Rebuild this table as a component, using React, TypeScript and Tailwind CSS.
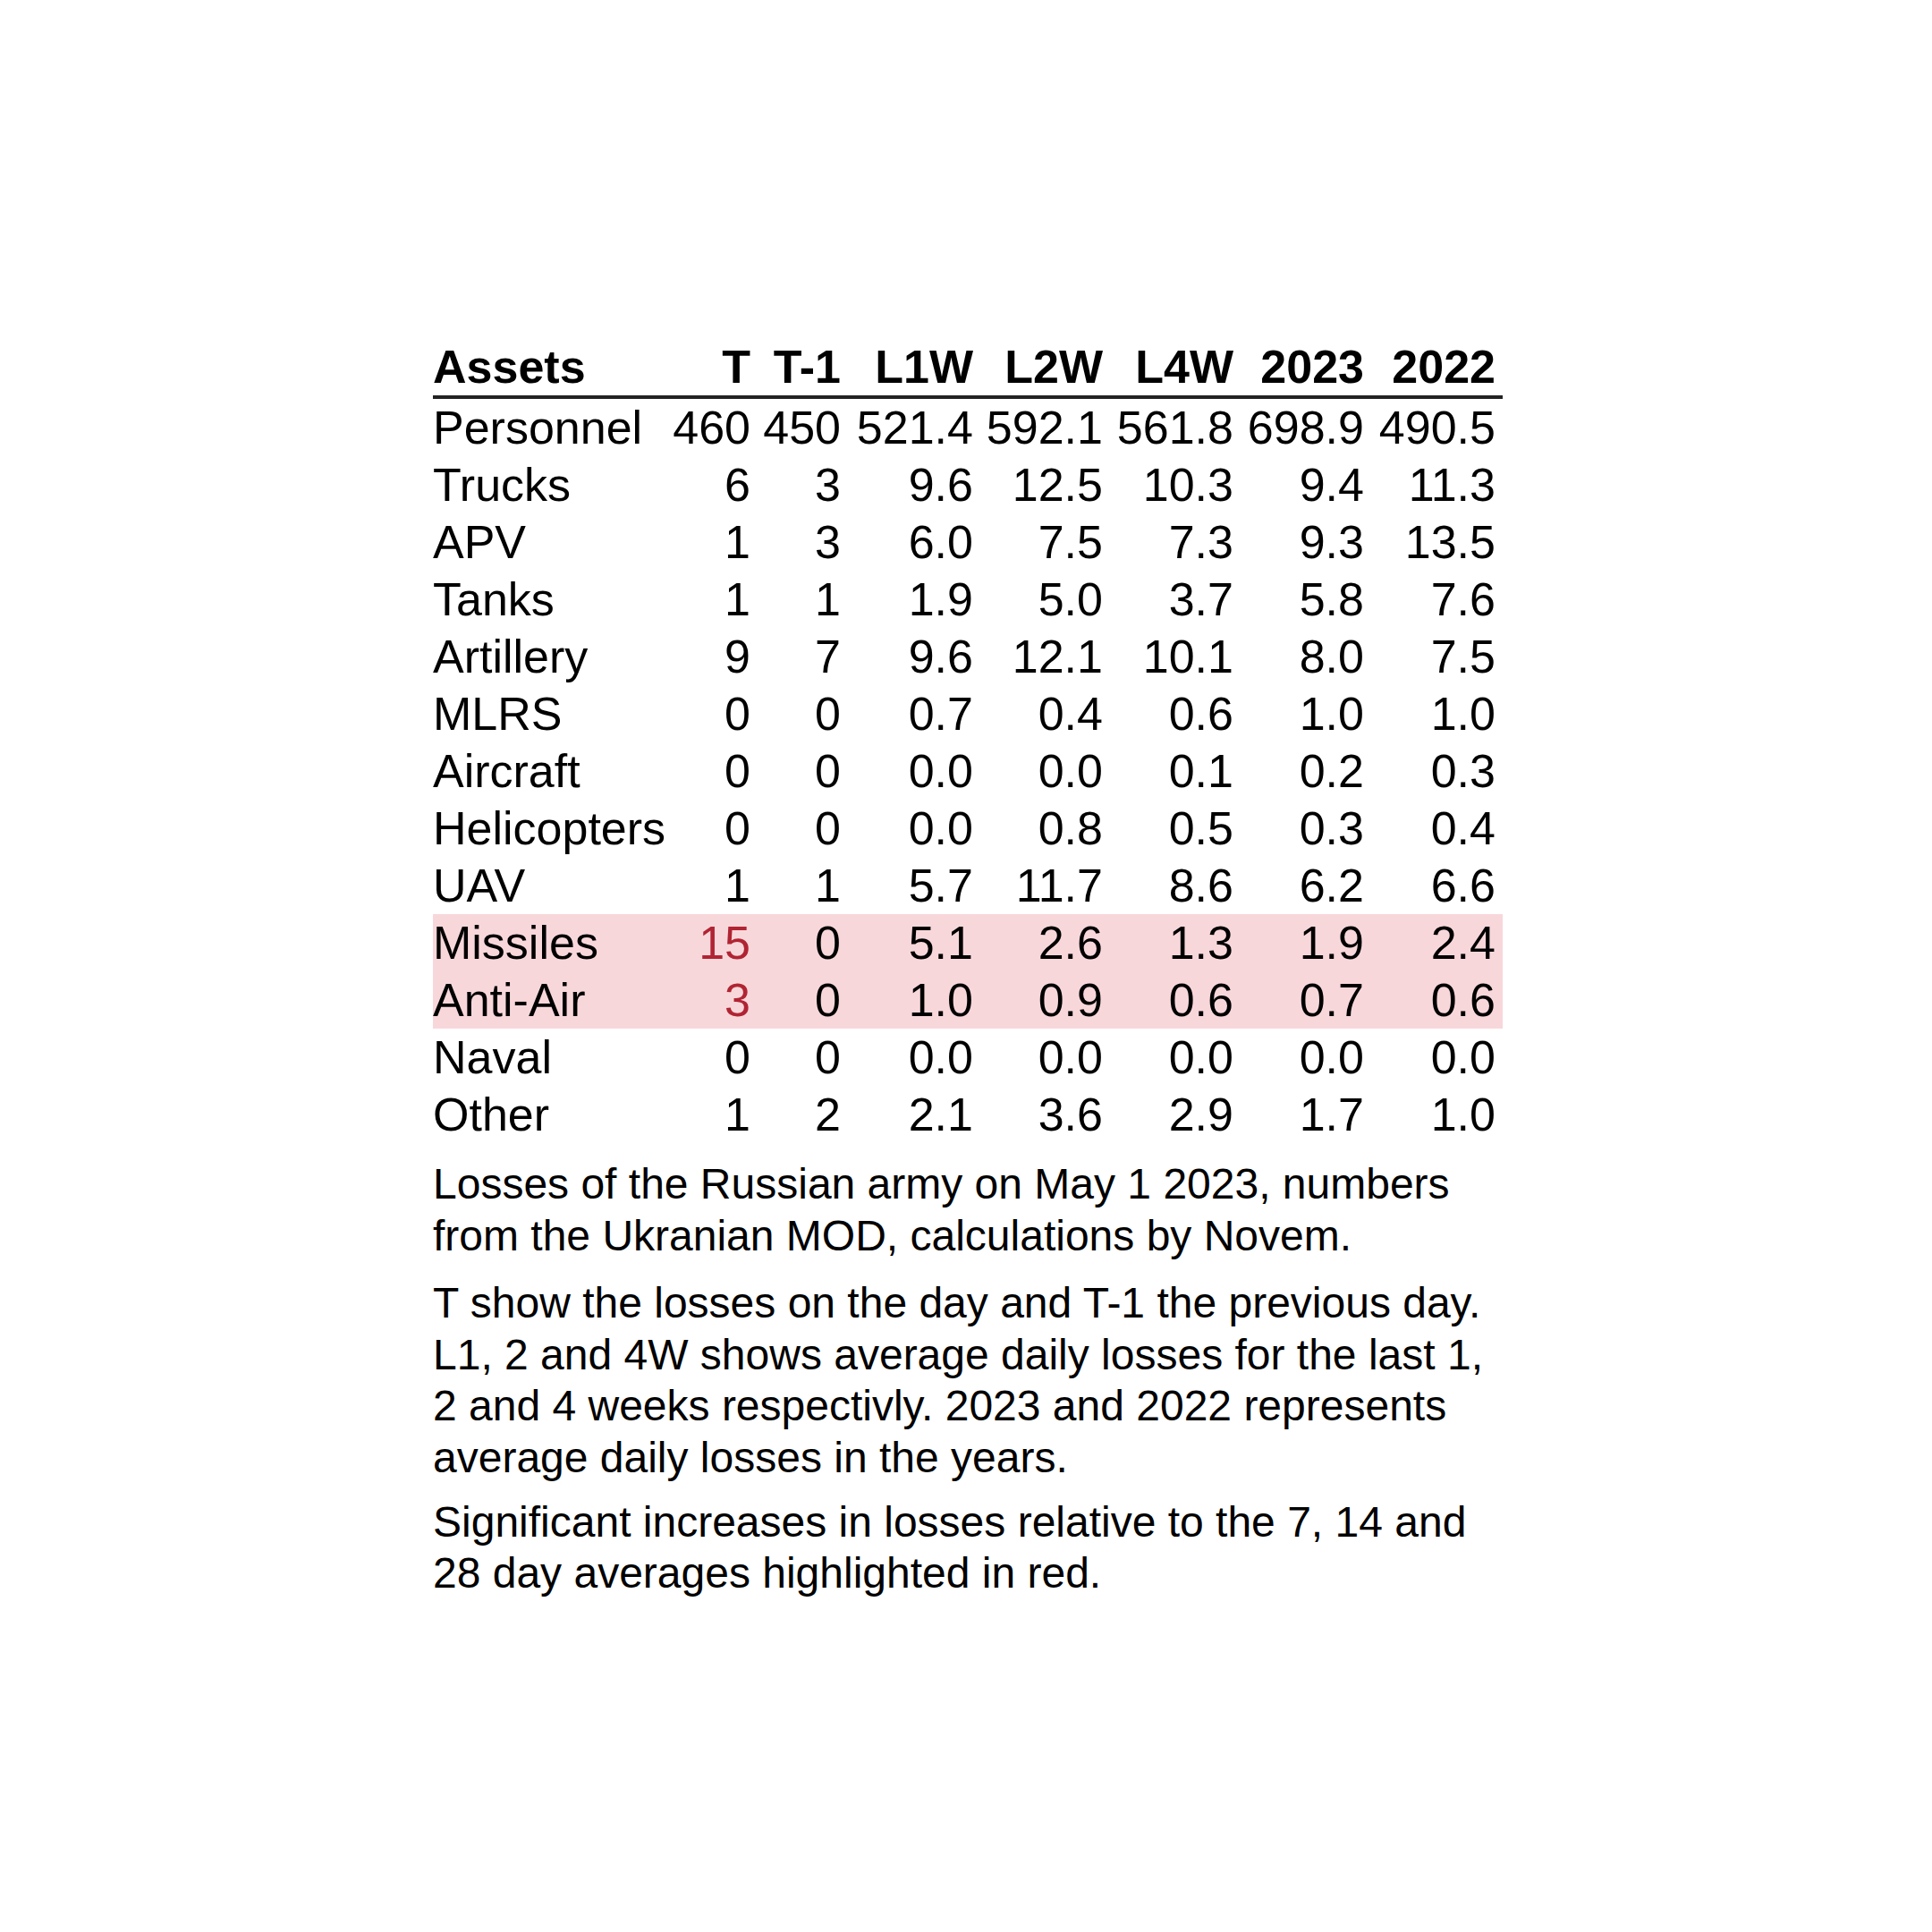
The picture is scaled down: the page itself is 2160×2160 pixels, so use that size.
import React from "react";

type Row = {
  name: string;
  vals: string[];
  hl?: boolean;
};

const rows: Row[] = [
  { name: "Personnel", vals: ["460", "450", "521.4", "592.1", "561.8", "698.9", "490.5"] },
  { name: "Trucks", vals: ["6", "3", "9.6", "12.5", "10.3", "9.4", "11.3"] },
  { name: "APV", vals: ["1", "3", "6.0", "7.5", "7.3", "9.3", "13.5"] },
  { name: "Tanks", vals: ["1", "1", "1.9", "5.0", "3.7", "5.8", "7.6"] },
  { name: "Artillery", vals: ["9", "7", "9.6", "12.1", "10.1", "8.0", "7.5"] },
  { name: "MLRS", vals: ["0", "0", "0.7", "0.4", "0.6", "1.0", "1.0"] },
  { name: "Aircraft", vals: ["0", "0", "0.0", "0.0", "0.1", "0.2", "0.3"] },
  { name: "Helicopters", vals: ["0", "0", "0.0", "0.8", "0.5", "0.3", "0.4"] },
  { name: "UAV", vals: ["1", "1", "5.7", "11.7", "8.6", "6.2", "6.6"] },
  { name: "Missiles", vals: ["15", "0", "5.1", "2.6", "1.3", "1.9", "2.4"], hl: true },
  { name: "Anti-Air", vals: ["3", "0", "1.0", "0.9", "0.6", "0.7", "0.6"], hl: true },
  { name: "Naval", vals: ["0", "0", "0.0", "0.0", "0.0", "0.0", "0.0"] },
  { name: "Other", vals: ["1", "2", "2.1", "3.6", "2.9", "1.7", "1.0"] },
];

const headers = ["T", "T-1", "L1W", "L2W", "L4W", "2023", "2022"];

const gridCls =
  "grid grid-cols-[255px_100px_101px_148px_145px_146px_146px_147px] pr-[8px]";

export default function App() {
  return (
    <div className="min-h-[2160px] w-[2160px] bg-white text-black font-['Liberation_Sans',Arial,sans-serif]">
      <div className="w-[1196px] ml-[484px] pt-[378px]">
        <div className="text-[52px]">
          <div className={`${gridCls} font-bold leading-[64px] h-[64px] border-b-[4px] border-[#222222] box-content`}>
            <div className="text-left">Assets</div>
            {headers.map((h) => (
              <div key={h} className="text-right">
                {h}
              </div>
            ))}
          </div>
          {rows.map((r) => (
            <div
              key={r.name}
              className={`${gridCls} leading-[64px] h-[64px] ${r.hl ? "bg-[#f8d7da]" : ""}`}
            >
              <div className="text-left whitespace-nowrap">{r.name}</div>
              {r.vals.map((v, i) => (
                <div
                  key={i}
                  className={`text-right whitespace-nowrap ${r.hl && i === 0 ? "text-[#b02433]" : ""}`}
                >
                  {v}
                </div>
              ))}
            </div>
          ))}
        </div>
        <div className="mt-[17px] text-[48px] leading-[1.2]">
          <p>Losses of the Russian army on May 1 2023, numbers from the Ukranian MOD, calculations by Novem.</p>
          <p className="mt-[18px]">
            T show the losses on the day and T-1 the previous day. L1, 2 and 4W shows average daily losses for the
            last 1, 2 and 4 weeks respectivly. 2023 and 2022 represents average daily losses in the years.
          </p>
          <p className="mt-[14px]">
            Significant increases in losses relative to the 7, 14 and 28 day averages highlighted in red.
          </p>
        </div>
      </div>
    </div>
  );
}
